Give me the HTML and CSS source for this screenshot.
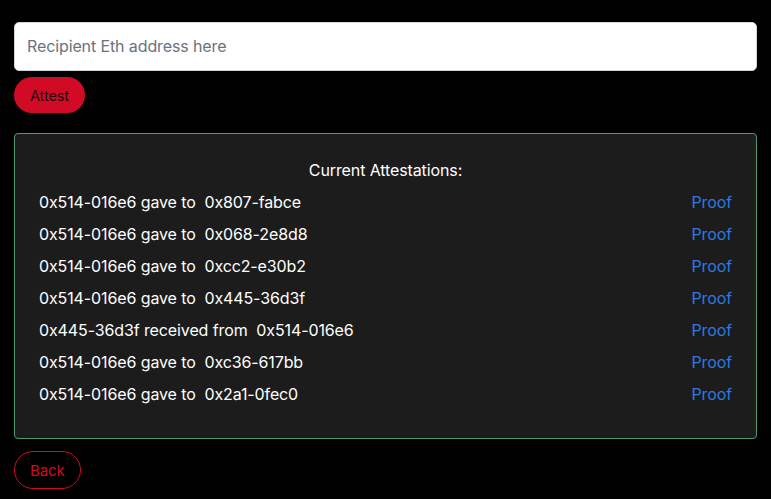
FILE: index.html
```html
<!DOCTYPE html>
<html>
<head>
<meta charset="utf-8">
<link rel="stylesheet" href="styles.css">
</head>
<body>
<div class="page">
  <input class="addr" type="text" placeholder="Recipient Eth address here">
  <div class="actions"><button class="btn-attest">Attest</button></div>
  <div class="card">
    <div class="title">Current Attestations:</div>
    <div class="row"><span>0x514-016e6 gave to&nbsp; 0x807-fabce</span><a class="proof">Proof</a></div>
    <div class="row"><span>0x514-016e6 gave to&nbsp; 0x068-2e8d8</span><a class="proof">Proof</a></div>
    <div class="row"><span>0x514-016e6 gave to&nbsp; 0xcc2-e30b2</span><a class="proof">Proof</a></div>
    <div class="row"><span>0x514-016e6 gave to&nbsp; 0x445-36d3f</span><a class="proof">Proof</a></div>
    <div class="row"><span>0x445-36d3f received from&nbsp; 0x514-016e6</span><a class="proof">Proof</a></div>
    <div class="row"><span>0x514-016e6 gave to&nbsp; 0xc36-617bb</span><a class="proof">Proof</a></div>
    <div class="row"><span>0x514-016e6 gave to&nbsp; 0x2a1-0fec0</span><a class="proof">Proof</a></div>
  </div>
  <div class="actions back-wrap"><button class="btn-back">Back</button></div>
</div>
</body>
</html>
```
FILE: styles.css
```css
html, body {
  margin: 0;
  padding: 0;
  background: #000;
  font-family: Inter, "Noto Sans", sans-serif;
  color: #fff;
}
.page {
  padding: 22px 14px 0 14px;
  display: flex;
  flex-direction: column;
}
.addr {
  box-sizing: border-box;
  width: 100%;
  height: 49px;
  border: 1px solid #d1d5db;
  border-radius: 5px;
  background: #fff;
  padding: 0 12px 1px 12px;
  font-family: Inter, sans-serif;
  font-size: 16px;
  letter-spacing: -0.007em;
  color: #111;
  outline: none;
}
.addr::placeholder { color: #6b7280; }
.actions { display: flex; margin-top: 6px; }
.btn-attest {
  height: 36px;
  padding: 0 16px;
  border: none;
  border-radius: 18px;
  background: #d10a26;
  color: #1a0a0c;
  font-family: Inter, sans-serif;
  font-size: 14.5px;
  letter-spacing: -0.007em;
}
.card {
  margin-top: 20px;
  box-sizing: border-box;
  background: #1c1c1c;
  border: 1px solid #4f9a6c;
  border-radius: 4px;
  padding: 24px 24px 32px 24px;
  display: flex;
  flex-direction: column;
  gap: 8px;
  letter-spacing: -0.007em;
}
.title {
  text-align: center;
  font-size: 16px;
  line-height: 24px;
}
.row {
  display: flex;
  justify-content: space-between;
  font-size: 16px;
  line-height: 24px;
}
.proof { color: #2f78e0; }
.back-wrap { margin-top: 12px; }
.btn-back {
  height: 38px;
  padding: 0 15px;
  border: 1px solid #d10a26;
  border-radius: 19px;
  background: transparent;
  color: #d10a26;
  font-family: Inter, sans-serif;
  font-size: 15px;
  letter-spacing: -0.007em;
}
```
